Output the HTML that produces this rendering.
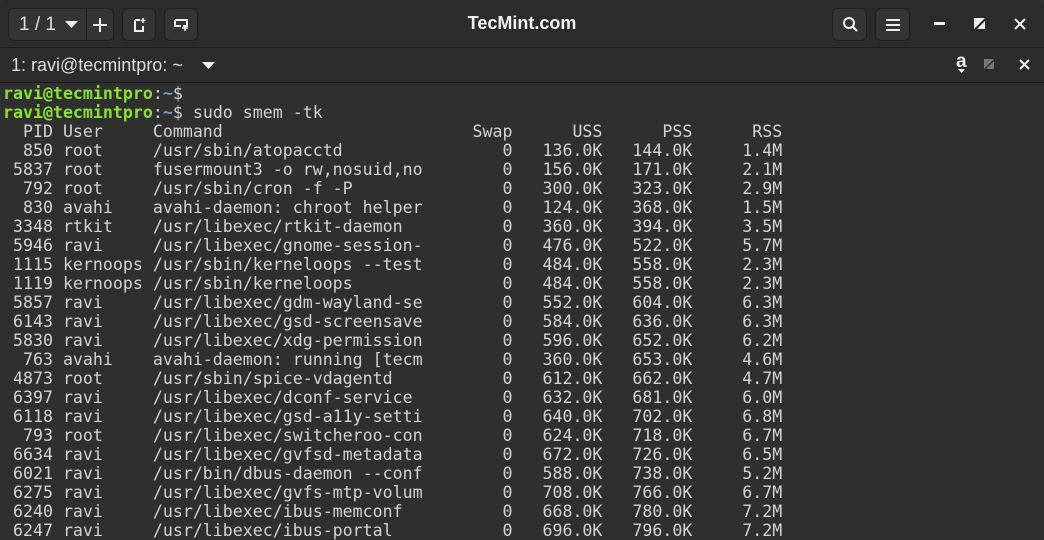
<!DOCTYPE html>
<html><head><meta charset="utf-8"><style>
*{margin:0;padding:0;box-sizing:border-box}
body{width:1044px;height:530px;overflow:hidden;background:#2f2f2f;font-family:"Liberation Sans",sans-serif;position:relative}
.hdr{position:absolute;left:0;top:0;width:1044px;height:48px;background:#2b2b2b;border-bottom:1px solid #1b1b1b;border-radius:8px 8px 0 0}
.btn{position:absolute;top:8px;height:33px;background:#343434;border:1px solid #1f1f1f;border-radius:6px;color:#eee}
.title{position:absolute;left:0;width:1044px;top:13px;text-align:center;color:#f2f2f2;font-weight:bold;font-size:18px}
.tab{position:absolute;left:0;top:48px;width:1044px;height:35px;background:#2c2c2c;border-bottom:1px solid #1c1c1c}
pre{position:absolute;left:3px;top:84px;font-family:"DejaVu Sans Mono",monospace;font-size:16.6px;line-height:19px;color:#d3d3d3}
.g{color:#8ae234;font-weight:bold}.b{color:#729fcf;font-weight:bold}
</style></head><body>
<div class="hdr">
 <div class="btn" style="left:8px;width:106px"><span style="position:absolute;left:10px;top:5px;font-size:19px;color:#ddd">1 / 1</span>
  <svg style="position:absolute;left:56px;top:12px" width="14" height="8"><path d="M0 0H13L6.5 7Z" fill="#eee"/></svg>
  <div style="position:absolute;left:77px;top:0;width:1px;height:31px;background:#1f1f1f"></div>
  <svg style="position:absolute;left:83px;top:8px" width="16" height="16"><path d="M8 1V15M1 8H15" stroke="#eee" stroke-width="2"/></svg></div>
 <div class="btn" style="left:122px;width:34px"><svg style="position:absolute;left:10px;top:8px" width="14" height="16"><path d="M2 3H7M2 3V14H10V9" stroke="#eee" stroke-width="2" fill="none"/><path d="M10 1V6M7.5 3.5H12.5" stroke="#eee" stroke-width="1.6"/></svg></div>
 <div class="btn" style="left:164px;width:34px"><svg style="position:absolute;left:8px;top:8px" width="18" height="16"><path d="M2 3H14V9H10M2 3V9H8" stroke="#eee" stroke-width="2" fill="none"/><path d="M12 8V14M9 11H15" stroke="#eee" stroke-width="1.6"/></svg></div>
 <div class="title">TecMint.com</div>
 <div class="btn" style="left:832px;width:35px"><svg style="position:absolute;left:9px;top:7px" width="18" height="18"><circle cx="7" cy="7" r="5" stroke="#eee" stroke-width="2" fill="none"/><path d="M10.5 10.5L15 15" stroke="#eee" stroke-width="2.2"/></svg></div>
 <div class="btn" style="left:875px;width:35px"><svg style="position:absolute;left:9px;top:8px" width="16" height="16"><path d="M1 3H15M1 8H15M1 13H15" stroke="#eee" stroke-width="2"/></svg></div>
 <svg style="position:absolute;left:934px;top:22px" width="12" height="4"><rect width="11" height="3" fill="#eee"/></svg>
 <svg style="position:absolute;left:974px;top:18px" width="12" height="12"><path d="M0 0H11L0 11Z" fill="#eee"/><path d="M11 11H3L11 3Z" fill="#eee"/></svg>
 <svg style="position:absolute;left:1014px;top:18px" width="12" height="12"><path d="M1 1L11 11M11 1L1 11" stroke="#eee" stroke-width="2"/></svg>
</div>
<div class="tab">
 <span style="position:absolute;left:11px;top:7px;font-size:18px;color:#ddd">1: ravi@tecmintpro: ~</span>
 <svg style="position:absolute;left:202px;top:14px" width="14" height="8"><path d="M0 0H13L6.5 7Z" fill="#eee"/></svg>
 <span style="position:absolute;left:956px;top:3px;font-size:19px;color:#eee;font-weight:bold">a</span>
 <svg style="position:absolute;left:958px;top:21px" width="8" height="6"><path d="M0 0H7L3.5 4Z" fill="#eee"/></svg>
 <svg style="position:absolute;left:984px;top:11px" width="11" height="11"><path d="M0 0H10L0 10Z" fill="#777"/><path d="M10 10H2L10 2Z" fill="#777"/></svg>
 <svg style="position:absolute;left:1019px;top:11px" width="11" height="11"><path d="M1 1L10 10M10 1L1 10" stroke="#eee" stroke-width="2"/></svg>
</div>
<pre><span class="g">ravi@tecmintpro</span>:<span class="b">~</span>$
<span class="g">ravi@tecmintpro</span>:<span class="b">~</span>$ sudo smem -tk
  PID User     Command                         Swap      USS      PSS      RSS
  850 root     /usr/sbin/atopacctd                0   136.0K   144.0K     1.4M
 5837 root     fusermount3 -o rw,nosuid,no        0   156.0K   171.0K     2.1M
  792 root     /usr/sbin/cron -f -P               0   300.0K   323.0K     2.9M
  830 avahi    avahi-daemon: chroot helper        0   124.0K   368.0K     1.5M
 3348 rtkit    /usr/libexec/rtkit-daemon          0   360.0K   394.0K     3.5M
 5946 ravi     /usr/libexec/gnome-session-        0   476.0K   522.0K     5.7M
 1115 kernoops /usr/sbin/kerneloops --test        0   484.0K   558.0K     2.3M
 1119 kernoops /usr/sbin/kerneloops               0   484.0K   558.0K     2.3M
 5857 ravi     /usr/libexec/gdm-wayland-se        0   552.0K   604.0K     6.3M
 6143 ravi     /usr/libexec/gsd-screensave        0   584.0K   636.0K     6.3M
 5830 ravi     /usr/libexec/xdg-permission        0   596.0K   652.0K     6.2M
  763 avahi    avahi-daemon: running [tecm        0   360.0K   653.0K     4.6M
 4873 root     /usr/sbin/spice-vdagentd           0   612.0K   662.0K     4.7M
 6397 ravi     /usr/libexec/dconf-service         0   632.0K   681.0K     6.0M
 6118 ravi     /usr/libexec/gsd-a11y-setti        0   640.0K   702.0K     6.8M
  793 root     /usr/libexec/switcheroo-con        0   624.0K   718.0K     6.7M
 6634 ravi     /usr/libexec/gvfsd-metadata        0   672.0K   726.0K     6.5M
 6021 ravi     /usr/bin/dbus-daemon --conf        0   588.0K   738.0K     5.2M
 6275 ravi     /usr/libexec/gvfs-mtp-volum        0   708.0K   766.0K     6.7M
 6240 ravi     /usr/libexec/ibus-memconf          0   668.0K   780.0K     7.2M
 6247 ravi     /usr/libexec/ibus-portal           0   696.0K   796.0K     7.2M</pre>
</body></html>
